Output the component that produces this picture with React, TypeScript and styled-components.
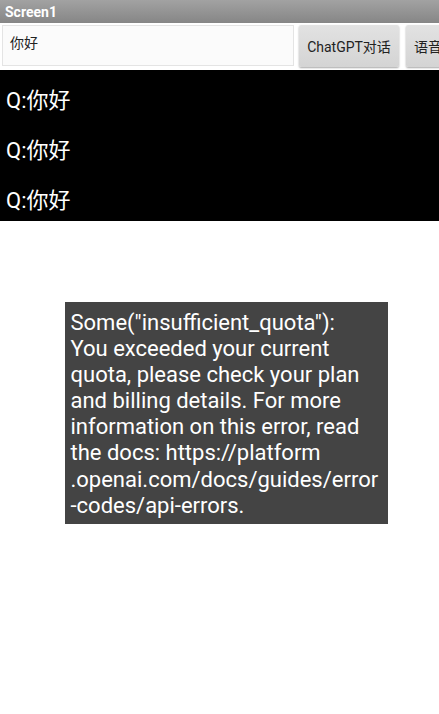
import React from "react";
import styled, { createGlobalStyle } from "styled-components";

const GlobalStyle = createGlobalStyle`
  html, body {
    margin: 0;
    padding: 0;
    background: #fff;
    font-family: Roboto, "Noto Sans CJK SC", sans-serif;
  }
`;

const Screen = styled.div`
  width: 439px;
  height: 714px;
  display: flex;
  flex-direction: column;
  overflow: hidden;
  background: #fff;
`;

const TitleBar = styled.div`
  height: 23px;
  display: flex;
  align-items: center;
  padding-left: 5px;
  background: linear-gradient(#a2a2a2, #868686);
  color: #fff;
  font-weight: bold;
  font-size: 14px;
`;

const Toolbar = styled.div`
  display: flex;
  align-items: flex-start;
  padding: 2px 0 0 2px;
  height: 45px;
  white-space: nowrap;
`;

const Input = styled.div`
  box-sizing: border-box;
  width: 292px;
  height: 41px;
  flex-shrink: 0;
  padding: 6px 0 0 7px;
  border: 1px solid #e4e4e4;
  background: #fbfbfb;
  font-size: 14px;
  color: #222;
`;

const Button = styled.div<{ $width: number; $gap: number }>`
  box-sizing: border-box;
  width: ${(p) => p.$width}px;
  margin-left: ${(p) => p.$gap}px;
  height: 42px;
  flex-shrink: 0;
  display: flex;
  align-items: center;
  justify-content: center;
  border-radius: 2px;
  background: linear-gradient(#e2e2e2, #d4d4d4);
  box-shadow: 0 1px 2px rgba(0, 0, 0, 0.35);
  font-size: 14px;
  color: #222;
`;

const List = styled.div`
  background: #000;
  height: 151px;
  display: flex;
  flex-direction: column;
`;

const Row = styled.div`
  height: 50px;
  display: flex;
  align-items: center;
  padding: 6px 0 0 6px;
  box-sizing: border-box;
  color: #fff;
  font-size: 22px;
`;

const Body = styled.div`
  flex: 1;
  display: flex;
  justify-content: center;
  padding: 81px 0 0 13px;
`;

const Toast = styled.div`
  box-sizing: border-box;
  width: 323px;
  height: 222px;
  background: #444;
  color: #fff;
  font-size: 22px;
  line-height: 26.1px;
  padding: 8px 2px 0 6px;
  white-space: nowrap;
  overflow: hidden;
`;

const rows = ["Q:你好", "Q:你好", "Q:你好"];

const toastLines = [
  'Some("insufficient_quota"):',
  "You exceeded your current",
  "quota, please check your plan",
  "and billing details. For more",
  "information on this error, read",
  "the docs: https://platform",
  ".openai.com/docs/guides/error",
  "-codes/api-errors.",
];

export default function App() {
  return (
    <>
      <GlobalStyle />
      <Screen>
        <TitleBar>Screen1</TitleBar>
        <Toolbar>
          <Input>你好</Input>
          <Button $width={100} $gap={5}>ChatGPT对话</Button>
          <Button $width={44} $gap={7}>语音</Button>
        </Toolbar>
        <List>
          {rows.map((r, i) => (
            <Row key={i}>{r}</Row>
          ))}
        </List>
        <Body>
          <Toast>
            {toastLines.map((l, i) => (
              <div key={i}>{l}</div>
            ))}
          </Toast>
        </Body>
      </Screen>
    </>
  );
}
